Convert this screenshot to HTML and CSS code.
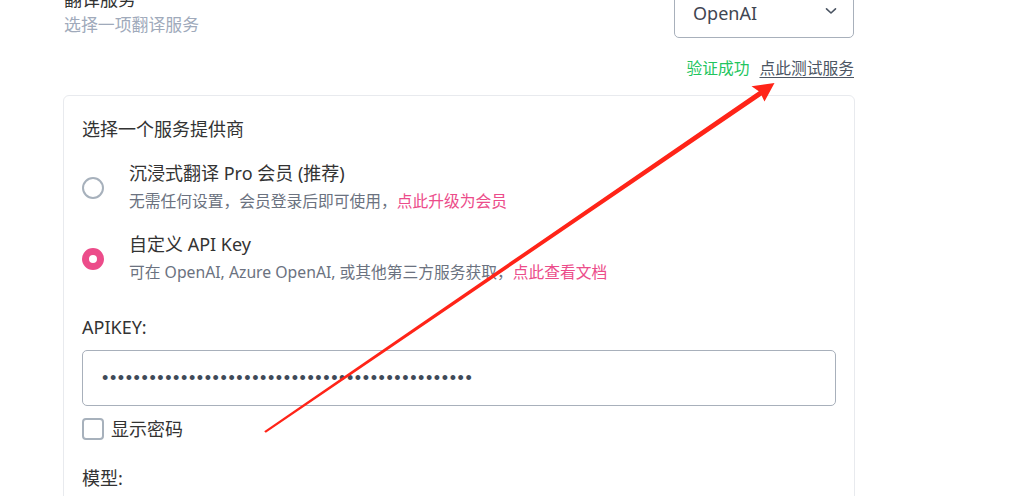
FILE: index.html
```html
<!DOCTYPE html>
<html lang="zh-CN">
<head>
<meta charset="utf-8">
<title>翻译服务</title>
<link rel="stylesheet" href="styles.css">
</head>
<body>
<div class="page">
  <div class="top-row">
    <div class="label-col">
      <div class="field-label">翻译服务</div>
      <div class="field-hint">选择一项翻译服务</div>
    </div>
    <div class="select">
      <span class="select-value">OpenAI</span>
      <svg class="chevron" width="12" height="8" viewBox="0 0 12 8"><path d="M1.5 1.8 L6 6 L10.5 1.8" fill="none" stroke="#4b5563" stroke-width="1.6" stroke-linecap="round" stroke-linejoin="round"/></svg>
    </div>
  </div>
  <div class="status-row">
    <span class="ok">验证成功</span>
    <a class="test-link" href="#">点此测试服务</a>
  </div>
  <div class="card">
    <div class="card-title">选择一个服务提供商</div>
    <label class="option">
      <span class="radio"></span>
      <span class="option-text">
        <span class="option-title">沉浸式翻译 Pro 会员 (推荐)</span>
        <span class="option-desc">无需任何设置，会员登录后即可使用，<a class="pink" href="#">点此升级为会员</a></span>
      </span>
    </label>
    <label class="option option-second">
      <span class="radio radio-on"></span>
      <span class="option-text">
        <span class="option-title">自定义 API Key</span>
        <span class="option-desc">可在 OpenAI, Azure OpenAI, 或其他第三方服务获取，<a class="pink" href="#">点此查看文档</a></span>
      </span>
    </label>
    <div class="input-label">APIKEY:</div>
    <input class="key-input" type="password" value="sk-abcdefghijklmnopqrstuvwxyz0123456789ABCDEFGH">
    <label class="check-row">
      <span class="checkbox"></span>
      <span class="check-text">显示密码</span>
    </label>
    <div class="input-label model-label">模型:</div>
  </div>
  <svg class="arrow" width="1011" height="496" viewBox="0 0 1011 496">
    <polygon points="264.2,431.2 265.8,432.8 761.6,95.6 764.5,101.5 774.5,83 751.5,86.2 758.8,91.2" fill="#ff2418"/>
  </svg>
</div>
</body>
</html>
```

FILE: styles.css
```css
html, body {
  margin: 0;
  padding: 0;
  background: #ffffff;
  overflow: hidden;
  height: 496px;
}

body {
  font-family: "Noto Sans", "Noto Sans CJK SC", sans-serif;
  color: #374151;
}

.page {
  width: 792px;
  margin-left: 63px;
  margin-top: -14px;
}

.top-row {
  display: flex;
  justify-content: space-between;
  align-items: flex-start;
}

.label-col {
  padding-left: 1px;
}

.field-label {
  font-size: 18px;
  line-height: 26px;
  color: #333;
}

.field-hint {
  font-size: 16.9px;
  line-height: 26px;
  color: #a0aabb;
}

.select {
  box-sizing: border-box;
  width: 180px;
  height: 52px;
  border: 1px solid #a8b0bb;
  border-radius: 5px;
  display: flex;
  align-items: center;
  justify-content: space-between;
  padding: 0 16px 0 18px;
  margin-right: 1px;
}

.select-value {
  font-size: 18px;
  color: #3f4652;
  padding-top: 2px;
}

.chevron {
  margin-top: -2px;
}

.status-row {
  display: flex;
  justify-content: flex-end;
  gap: 10px;
  margin-top: 19px;
  padding-right: 1px;
  font-size: 15.75px;
  line-height: 22px;
}

.ok {
  color: #22c55e;
}

.test-link {
  color: #4b5563;
  text-decoration: underline;
  text-underline-offset: 3px;
}

.card {
  position: relative;
  margin-top: 16px;
  border: 1px solid #e8eaee;
  border-radius: 6px;
  padding: 20px 18px 40px 18px;
}

.card-title {
  font-size: 18px;
  line-height: 26px;
  color: #333;
}

.option {
  display: flex;
  align-items: center;
  gap: 25px;
  margin-top: 18px;
}

.option-second {
  margin-top: 17px;
}

.radio {
  box-sizing: border-box;
  width: 22px;
  height: 22px;
  border-radius: 50%;
  border: 2px solid #a7b1bc;
  flex: none;
  margin-top: 1px;
}

.radio-on {
  border: 7px solid #ec4c8a;
}

.option-text {
  display: flex;
  flex-direction: column;
}

.option-title {
  font-size: 18px;
  line-height: 26px;
  color: #333;
}

.option-desc {
  font-size: 15.75px;
  line-height: 26px;
  margin-top: 2px;
  color: #6b7280;
}

.pink {
  color: #ec4c8a;
  text-decoration: none;
}

.input-label {
  font-size: 18px;
  line-height: 26px;
  color: #333;
  margin-top: 29px;
}

.key-input {
  display: block;
  box-sizing: border-box;
  width: 100%;
  height: 56px;
  margin-top: 10px;
  border: 1px solid #a8b0bb;
  border-radius: 5px;
  padding: 0 19px;
  font-family: "Liberation Sans", sans-serif;
  font-size: 18px;
  letter-spacing: 1.6px;
  color: #3f4a58;
  background: #fff;
  outline: none;
}

.check-row {
  display: flex;
  align-items: center;
  gap: 7px;
  margin-top: 12px;
}

.checkbox {
  box-sizing: border-box;
  width: 22px;
  height: 22px;
  border: 2px solid #a7b1bc;
  border-radius: 4px;
  flex: none;
}

.check-text {
  font-size: 18px;
  line-height: 22px;
  color: #333;
}

.model-label {
  margin-top: 25px;
}

.arrow {
  position: absolute;
  left: 0;
  top: 0;
  pointer-events: none;
}
```
